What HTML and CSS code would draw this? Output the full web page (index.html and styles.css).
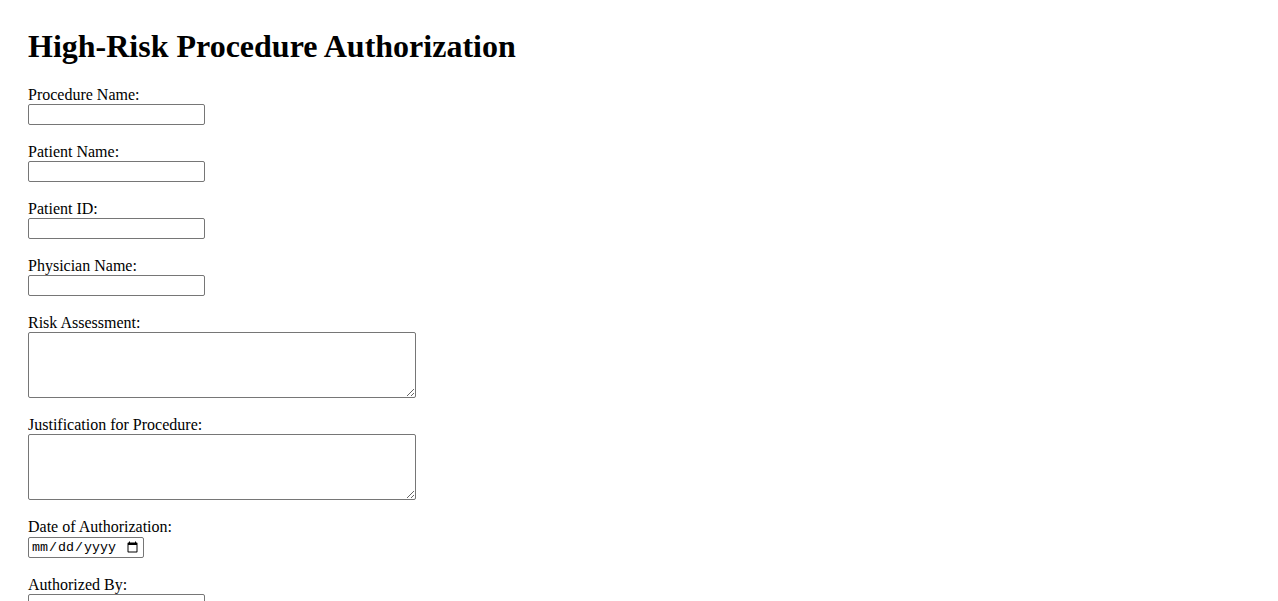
FILE: index.html
```html
<!DOCTYPE html>
<html lang="en">
<head>
<meta charset="utf-8">
<title>High-Risk Procedure Authorization</title>
<link rel="stylesheet" href="styles.css">
</head>
<body>
<div class="page">
  <h1 class="title">High-Risk Procedure Authorization</h1>
  <form class="form">
    <label for="procedure">Procedure Name:</label><br>
    <input class="text" type="text" id="procedure" name="procedure"><br><br>
    <label for="patient">Patient Name:</label><br>
    <input class="text" type="text" id="patient" name="patient"><br><br>
    <label for="pid">Patient ID:</label><br>
    <input class="text" type="text" id="pid" name="pid"><br><br>
    <label for="physician">Physician Name:</label><br>
    <input class="text" type="text" id="physician" name="physician"><br><br>
    <label for="risk">Risk Assessment:</label><br>
    <textarea class="area" id="risk" name="risk" rows="4" cols="50"></textarea><br><br>
    <label for="justification">Justification for Procedure:</label><br>
    <textarea class="area" id="justification" name="justification" rows="4" cols="50"></textarea><br><br>
    <label for="date">Date of Authorization:</label><br>
    <input class="date" type="date" id="date" name="date"><br><br>
    <label for="authorized">Authorized By:</label><br>
    <input class="text" type="text" id="authorized" name="authorized"><br><br>
  </form>
</div>
</body>
</html>
```
FILE: styles.css
```css
body {
  margin: 8px;
  font-family: "Liberation Serif", "Times New Roman", serif;
  font-size: 16px;
  color: #000;
  background: #fff;
}
.page {
  padding: 20px;
}
.title {
  margin: 0 0 21.44px;
  font-size: 32px;
  font-weight: bold;
}
.form {
  margin: 0;
}
.text {
  width: 177px;
  height: 21px;
  box-sizing: border-box;
  border: 1px solid #767676;
  border-radius: 2px;
  padding: 1px 2px;
  font-family: "Liberation Sans", Arial, sans-serif;
  font-size: 13.33px;
  margin: 0;
}
.area {
  width: 388px;
  height: 66px;
  box-sizing: border-box;
  border: 1px solid #767676;
  border-radius: 2px;
  padding: 2px;
  font-family: "Liberation Mono", monospace;
  font-size: 13.33px;
  margin: 0;
  vertical-align: bottom;
}
.date {
  width: 116px;
  height: 21px;
  box-sizing: border-box;
  border: 1px solid #767676;
  border-radius: 2px;
  padding: 1px 2px;
  font-family: "Liberation Mono", monospace;
  font-size: 13.33px;
  margin: 1px 0 0;
}
```
